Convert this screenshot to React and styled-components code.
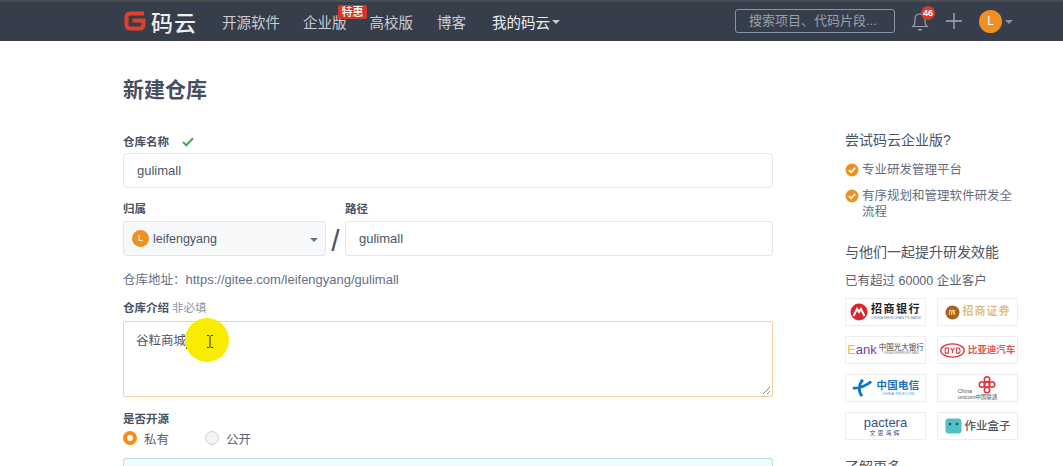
import React from "react";
import styled, { createGlobalStyle } from "styled-components";

const Global = createGlobalStyle`
  html, body { margin: 0; padding: 0; background: #fff; }
  body { font-family: "Liberation Sans", "Noto Sans CJK SC", sans-serif; color: #40485b; }
  * { box-sizing: border-box; }
`;
const Page = styled.div`width: 1063px; height: 466px; overflow: hidden; position: relative; background: #fff;`;
const Nav = styled.header`
  height: 41px; background: #363e4b; border-top: 2px solid #4a4d52; display: flex; align-items: center; padding: 0 0 1px 124px; color: #dfe2e6;
`;
const Logo = styled.div`display: flex; align-items: center; gap: 5px; width: 98px; color: #eef0f2; font-size: 22px; font-weight: 500; letter-spacing: 1px;`;
const NavLink = styled.span`
  position: relative; font-size: 14.5px; margin-right: ${p => p.$mr}px; color: ${p => p.$strong ? "#eceef1" : "#c9ccd2"}; white-space: nowrap; display: flex; align-items: center;
`;
const Hot = styled.span`
  position: absolute; left: 35px; top: -6px; width: 29px; height: 14px; background: #d3342b; border-radius: 2px; color: #fff; font-size: 11px; line-height: 14px; text-align: center; font-weight: 500;
`;
const Caret = styled.i`
  display: inline-block; width: 0; height: 0; margin-left: ${p => p.$auto ? "auto" : "2px"}; margin-right: ${p => p.$auto ? "-1px" : 0}; margin-top: 2px; border-left: 4px solid transparent; border-right: 4px solid transparent; border-top: 4px solid ${p => p.$c || "#c9ccd1"};
`;
const NavRight = styled.div`margin-left: auto; display: flex; align-items: center; padding-right: 50px;`;
const Search = styled.div`
  width: 160px; height: 24px; border: 1px solid #8b95a3; border-radius: 3px; color: #9aa1ab; font-size: 13px; line-height: 22px; padding-left: 13px; margin-right: 16px; white-space: nowrap;
`;
const Bell = styled.div`position: relative; width: 18px; height: 24px; margin-right: 17px;`;
const Count = styled.span`
  position: absolute; left: 10px; top: -3px; width: 14px; height: 14px; border-radius: 50%; background: #d6392f; color: #fff; font-size: 9px; font-weight: 700; line-height: 14px; text-align: center;
`;
const AvatarNav = styled.div`
  width: 23px; height: 23px; border-radius: 50%; background: #f09020; color: #fff; font-size: 12px; line-height: 23px; text-align: center; margin-left: 17px; margin-right: 1px;
`;
const Body = styled.main`display: flex; gap: 72px; padding-left: 123px;`;
const Form = styled.section`width: 650px; flex: none;`;
const Title = styled.h1`margin: 36px 0 0; font-size: 21px; line-height: 26px; font-weight: 700; color: #474e5f;`;
const Label = styled.div`
  font-size: 11.5px; font-weight: 700; color: #4a5263; line-height: 16px; margin-top: ${p => p.$mt}px; display: flex; align-items: center; gap: 13px;
`;
const Optional = styled.span`font-weight: 400; color: #8a93a3; margin-left: -10px;`;
const Input = styled.div`
  height: 35px; border: 1px solid #e3e6ea; border-radius: 3px; font-size: 13px; line-height: 33px; padding-left: 13px; margin-top: ${p => p.$mt}px; color: #4d5566; background: #fff;
`;
const Row = styled.div`display: flex; margin-top: 5px; align-items: flex-start;`;
const Col = styled.div`width: ${p => p.$w ? p.$w + "px" : "auto"}; flex: ${p => p.$w ? "none" : 1};`;
const SelectBox = styled.div`
  height: 35px; margin-top: 4px; border: 1px solid #e3e6ea; border-radius: 3px; background: #f7f8f9; display: flex; align-items: center; padding: 0 8px; font-size: 12.5px; color: #4d5566;
`;
const Avatar = styled.span`width: 17px; height: 17px; border-radius: 50%; background: #f09020; color: #fff; font-size: 9px; line-height: 17px; text-align: center; margin-right: 4px;`;
const Slash = styled.div`width: 19px; flex: none; font-size: 30px; color: #4a5468; line-height: 35px; text-align: center; margin-top: 30px; font-weight: 400;`;
const Addr = styled.div`font-size: 12.5px; color: #667085; line-height: 16px; margin-top: 14px;`;
const Url = styled.span`font-size: 13px;`;
const TextArea = styled.div`
  position: relative; height: 76px; margin-top: 5px; border: 1px solid #f5cda0; border-radius: 2px; padding: 10px 12px; font-size: 12.5px; line-height: 18px; color: #4d5566; display: flex; align-items: flex-start;
`;
const Caretline = styled.i`display: inline-block; width: 1px; height: 15px; background: #333; margin-top: 2px;`;
const Grip = styled.svg`position: absolute; right: 1px; bottom: 1px;`;
const Radios = styled.div`display: flex; align-items: center; margin-top: 3px; height: 16px; font-size: 12.5px; color: #5b6373;`;
const Radio = styled.span`
  width: 14px; height: 14px; border-radius: 50%; margin-right: 7px; background: ${p => p.$on ? "#fff" : "#f2f3f4"}; border: ${p => p.$on ? "4px solid #f98b16" : "1px solid #cfd2d6"};
`;
const RadioText = styled.span`margin-right: ${p => p.$mr || 0}px;`;
const Notice = styled.div`height: 40px; margin-top: 12px; border: 1px solid #b7dcea; border-radius: 3px; background: #f1fafd;`;
const Side = styled.aside`width: 173px; flex: none; padding-top: 90px;`;
const SideTitle = styled.div`font-size: 14px; line-height: 18px; color: #4c5364; margin-top: ${p => p.$mt || 0}px;`;
const Bullet = styled.div`display: flex; gap: 3px; font-size: 12.5px; line-height: 16px; color: #666e7e; margin-top: ${p => p.$mt}px;`;
const Tick = styled.svg`flex: none; margin-top: 1px;`;
const SubText = styled.div`font-size: 12.5px; line-height: 16px; color: #5b6373; margin-top: 12px;`;
const Brands = styled.div`display: grid; grid-template-columns: 81px 81px; gap: 10px 11px; margin-top: 9px;`;
const Brand = styled.div`
  height: 28px; border: 1px solid #eceef0; background: #fff; display: flex; align-items: center; justify-content: center; gap: ${p => p.$gap ?? 3}px; overflow: hidden; white-space: nowrap;
`;
const BrandText = styled.span`
  font-size: ${p => p.$s || 10}px; font-weight: ${p => p.$w || 700}; color: ${p => p.$c}; letter-spacing: ${p => p.$ls || 0}px; line-height: 1.05; text-align: center; display: block;
`;
const Stack = styled.span`display: flex; flex-direction: column; align-items: ${p => p.$a || "center"};`;
const Tiny = styled.span`font-size: ${p => p.$s || 4}px; color: ${p => p.$c || "#7c8798"}; line-height: 5px;`;
const Knot = styled.svg`align-self: flex-end; margin-bottom: -5px; margin-right: -1px;`;
const Accent = styled.span`color: #f0b840;`;
const Spot = styled.div`
  position: absolute; left: 185px; top: 318px; width: 44px; height: 44px; border-radius: 50%; background: #f8ec00; display: flex; align-items: center; justify-content: center; padding: 3px 0 0 6px;
`;

const Check = () => (
  <Tick width="14" height="14" viewBox="0 0 14 14"><circle cx="7" cy="7" r="6.5" fill="#f09020"/><path d="M3.8 7.2 6.1 9.4 10.2 4.9" fill="none" stroke="#fff" strokeWidth="1.6"/></Tick>
);

export default function App() {
  return (
    <Page>
      <Global />
      <Nav>
        <Logo>
          <svg width="22" height="20" viewBox="0 0 22 20"><path d="M20 2.5H6.5Q2.5 2.5 2.5 6.5V13.5Q2.5 17.5 6.5 17.5H15.5Q19.5 17.5 19.5 13.5V9.5H8.5" fill="none" stroke="#e0402c" strokeWidth="4"/></svg>
          <span>码云</span>
        </Logo>
        <NavLink $mr={23}>开源软件</NavLink>
        <NavLink $mr={23}>企业版<Hot>特惠</Hot></NavLink>
        <NavLink $mr={24}>高校版</NavLink>
        <NavLink $mr={26}>博客</NavLink>
        <NavLink $mr={0} $strong>我的码云<Caret /></NavLink>
        <NavRight>
          <Search>搜索项目、代码片段...</Search>
          <Bell>
            <svg width="18" height="24" viewBox="0 0 18 24"><path d="M2 17.5Q4 16 4 12V9.5Q4 5 9 5T14 9.5V12Q14 16 16 17.5Z" fill="none" stroke="#9aa1ab" strokeWidth="1.2"/><path d="M6.5 20H11.5L9 22Z" fill="#9aa1ab"/></svg>
            <Count>46</Count>
          </Bell>
          <svg width="16" height="16" viewBox="0 0 16 16"><path d="M8 0V16M0 8H16" stroke="#a9afb8" strokeWidth="1.3"/></svg>
          <AvatarNav>L</AvatarNav>
          <Caret $c="#8b939e" />
        </NavRight>
      </Nav>
      <Body>
        <Form>
          <Title>新建仓库</Title>
          <Label $mt={31}>仓库名称
            <svg width="12" height="10" viewBox="0 0 12 10"><path d="M1 5 4.3 8.3 11 1.3" fill="none" stroke="#4ca35a" strokeWidth="2"/></svg>
          </Label>
          <Input $mt={3}>gulimall</Input>
          <Row>
            <Col $w={203}>
              <Label $mt={8}>归属</Label>
              <SelectBox>
                <Avatar>L</Avatar>leifengyang
                <Caret $c="#6b7280" $auto />
              </SelectBox>
            </Col>
            <Slash>/</Slash>
            <Col>
              <Label $mt={8}>路径</Label>
              <Input $mt={4}>gulimall</Input>
            </Col>
          </Row>
          <Addr>仓库地址：<Url>https://gitee.com/leifengyang/gulimall</Url></Addr>
          <Label $mt={12}>仓库介绍<Optional>非必填</Optional></Label>
          <TextArea>
            谷粒商城<Caretline />
            <Grip width="9" height="9" viewBox="0 0 9 9"><path d="M8 1 1 8M8 5 5 8" stroke="#8a8a8a" strokeWidth="1"/></Grip>
          </TextArea>
          <Label $mt={14}>是否开源</Label>
          <Radios>
            <Radio $on /><RadioText $mr={36}>私有</RadioText>
            <Radio /><RadioText>公开</RadioText>
          </Radios>
          <Notice />
        </Form>
        <Side>
          <SideTitle>尝试码云企业版?</SideTitle>
          <Bullet $mt={13}><Check />专业研发管理平台</Bullet>
          <Bullet $mt={10}><Check /><span>有序规划和管理软件研发全流程</span></Bullet>
          <SideTitle $mt={23}>与他们一起提升研发效能</SideTitle>
          <SubText>已有超过 60000 企业客户</SubText>
          <Brands>
            <Brand>
              <svg width="18" height="18" viewBox="0 0 18 18"><circle cx="9" cy="9" r="8.5" fill="#d8262c"/><path d="M3.5 13 7 6l2 3 2-3 3.5 7" fill="none" stroke="#fff" strokeWidth="2"/></svg>
              <Stack><BrandText $s={11} $c="#222" $ls={1.5}>招商银行</BrandText><Tiny>CHINA MERCHANTS BANK</Tiny></Stack>
            </Brand>
            <Brand>
              <svg width="15" height="15" viewBox="0 0 15 15"><circle cx="7.5" cy="7.5" r="7" fill="#a8641c"/><path d="M4 10 5 5h1l.5 5 1-5h1l.5 5 1-5" fill="none" stroke="#f3d080" strokeWidth="1"/></svg>
              <BrandText $s={11} $c="#dfc07f" $ls={1}>招商证券</BrandText>
            </Brand>
            <Brand $gap={2}>
              <BrandText $s={13} $w={500} $c="#6d3d96"><Accent>E</Accent>ank</BrandText>
              <Stack><BrandText $s={7.5} $w={400} $c="#444">中国光大银行</BrandText><Tiny $s={2.8}>CHINA EVERBRIGHT BANK</Tiny></Stack>
            </Brand>
            <Brand>
              <svg width="25" height="15" viewBox="0 0 24 14"><ellipse cx="12" cy="7" rx="11.3" ry="6.3" fill="none" stroke="#d8343a" strokeWidth="1.2"/><path d="M5 4.5H8V9.5H5ZM10 4.5 12 7 14 4.5M12 7V9.5M16 4.5H18.5Q20 7 18.5 9.5H16Z" fill="none" stroke="#d8343a" strokeWidth="1"/></svg>
              <BrandText $s={9.5} $c="#e0565a">比亚迪汽车</BrandText>
            </Brand>
            <Brand>
              <svg width="22" height="20" viewBox="0 0 24 20"><path d="M2 10C8 11 18 7 22 3M13 1C8 6 8 14 12 19" fill="none" stroke="#0b77c5" strokeWidth="3"/></svg>
              <Stack><BrandText $s={10.5} $c="#2173ba" $ls={.3}>中国电信</BrandText><Tiny $c="#5b9ccc">CHINA TELECOM</Tiny></Stack>
            </Brand>
            <Brand $gap={0}>
              <Stack $a="flex-start">
                <Knot width="22" height="18" viewBox="0 0 22 18">
                  <g fill="none" stroke="#e0323c" strokeWidth="1.6">
                    <circle cx="11" cy="3.5" r="2.7"/><circle cx="6" cy="8.5" r="2.7"/><circle cx="16" cy="8.5" r="2.7"/><circle cx="11" cy="8.5" r="2.7"/><circle cx="11" cy="14" r="2.7"/>
                  </g>
                </Knot>
                <BrandText $s={5.5} $w={400} $c="#555">China</BrandText>
                <BrandText $s={5.5} $w={400} $c="#555">unicom中国联通</BrandText>
              </Stack>
            </Brand>
            <Brand>
              <Stack><BrandText $s={13} $w={500} $c="#36518f">pactera</BrandText><BrandText $s={6} $w={400} $c="#36518f" $ls={2}>文思海辉</BrandText></Stack>
            </Brand>
            <Brand>
              <svg width="17" height="16" viewBox="0 0 17 16"><rect x=".5" y=".5" width="16" height="15" rx="3" fill="#4fc0c4"/><circle cx="5" cy="6" r="1.2" fill="#245"/><circle cx="12" cy="6" r="1.2" fill="#245"/></svg>
              <BrandText $s={11.5} $w={500} $c="#555">作业盒子</BrandText>
            </Brand>
          </Brands>
          <SideTitle $mt={18}>了解更多</SideTitle>
        </Side>
      </Body>
      <Spot>
        <svg width="8" height="13" viewBox="0 0 8 13"><path d="M1 .5H3L4 1.5 5 .5H7M4 1.5V11.5M1 12.5H3L4 11.5 5 12.5H7" fill="none" stroke="#333" strokeWidth="1"/></svg>
      </Spot>
    </Page>
  );
}
